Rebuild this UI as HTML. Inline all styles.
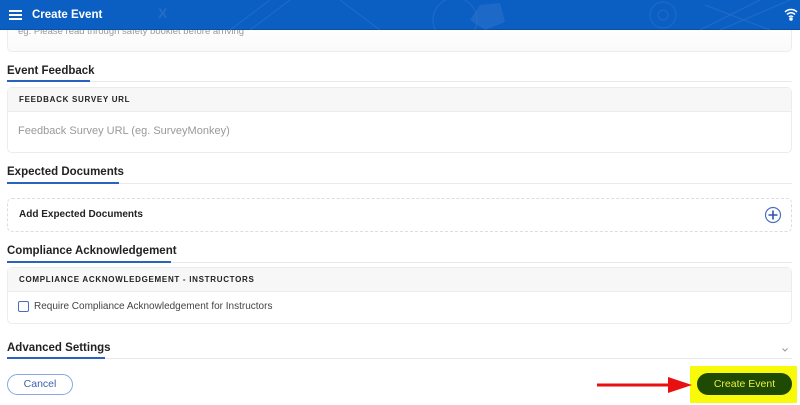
<!DOCTYPE html>
<html><head><style>
*{box-sizing:border-box;margin:0;padding:0}
body{width:800px;height:405px;overflow:hidden;background:#fff;font-family:"Liberation Sans",sans-serif;position:relative;color:#222}
.abs{position:absolute}
.hdr{left:0;top:0;width:800px;height:30px;background:#0b5fc2;border-bottom:1px solid #0a4fa0;z-index:5}
.h2{font-size:11.5px;font-weight:bold;color:#222}
.line{height:1px;background:#eaeaea;left:7px;width:785px}
.ul{height:2px;background:#2b62c0;left:7px}
.card{left:7px;width:785px;border:1px solid #ececec;border-radius:5px;background:#fff}
.ch{background:#f7f7f7;border-bottom:1px solid #ececec;font-size:8px;font-weight:bold;letter-spacing:.7px;padding-left:11px;color:#222}
</style></head><body>
<div class="abs hdr">
<svg class="abs" style="left:0;top:0" width="800" height="30">
<g stroke="#2f74cc" stroke-width="1" fill="none" opacity=".6">
<line x1="230" y1="30" x2="270" y2="0"/><line x1="250" y1="30" x2="290" y2="0"/><line x1="380" y1="30" x2="340" y2="0"/>
<circle cx="455" cy="20" r="22"/><circle cx="663" cy="15" r="13"/><circle cx="663" cy="15" r="5"/>
<line x1="700" y1="30" x2="760" y2="0"/><line x1="720" y1="30" x2="790" y2="0"/><line x1="705" y1="5" x2="770" y2="30"/>
</g>
<polygon points="480,5 500,3 505,22 485,30 470,20" fill="#2f74cc" opacity=".5"/>
<text x="158" y="18" fill="#2f74cc" font-size="14" font-weight="bold" opacity=".7">X</text>
</svg>
<div class="abs" style="left:9px;top:10px;width:13px;height:2px;background:#fff;box-shadow:0 4px 0 #fff,0 8px 0 #fff"></div>
<div class="abs" style="left:32px;top:9px;color:#fff;font-weight:bold;font-size:11.5px">Create Event</div>
<svg class="abs" style="left:784px;top:7px" width="14" height="14" viewBox="0 0 14 14" fill="none" stroke="#fff" stroke-width="1.5"><path d="M1 5a8.5 8.5 0 0 1 12 0M3 7.5a5.5 5.5 0 0 1 8 0M5 10a2.5 2.5 0 0 1 4 0"/><circle cx="7" cy="12" r="1" fill="#fff"/></svg>
</div>
<div class="abs card" style="top:20px;height:32px;border-top:none;background:linear-gradient(#fff,#fafafa)"></div>
<div class="abs" style="left:18px;top:26px;font-size:9.5px;color:#999">eg. Please read through safety booklet before arriving</div>

<div class="abs h2" style="left:7px;top:65px">Event Feedback</div>
<div class="abs line" style="top:81px"></div><div class="abs ul" style="top:80px;width:83px"></div>
<div class="abs card" style="top:87px;height:66px"><div class="ch" style="height:24px;line-height:23px">FEEDBACK SURVEY URL</div>
<div style="padding:13px 0 0 10px;font-size:11px;color:#999">Feedback Survey URL (eg. SurveyMonkey)</div></div>

<div class="abs h2" style="left:7px;top:166px">Expected Documents</div>
<div class="abs line" style="top:183px"></div><div class="abs ul" style="top:182px;width:112px"></div>
<div class="abs card" style="top:198px;height:34px;border:1px dashed #ddd"><div style="padding:10px 0 0 11px;font-size:10px;font-weight:bold">Add Expected Documents</div></div>
<svg class="abs" style="left:764px;top:206px" width="18" height="18" viewBox="0 0 18 18"><circle cx="9" cy="9" r="7.5" fill="none" stroke="#4a72c0" stroke-width="1.2"/><path d="M9 4.5v9M4.5 9h9" stroke="#2e55a8" stroke-width="1.6"/></svg>

<div class="abs h2" style="left:7px;top:245px">Compliance Acknowledgement</div>
<div class="abs line" style="top:262px"></div><div class="abs ul" style="top:261px;width:164px"></div>
<div class="abs card" style="top:267px;height:57px"><div class="ch" style="height:24px;line-height:23px">COMPLIANCE ACKNOWLEDGEMENT - INSTRUCTORS</div>
<div style="position:relative;height:32px"><div class="abs" style="left:10px;top:9px;width:11px;height:11px;border:1.5px solid #4a6fb8;border-radius:2px"></div>
<div class="abs" style="left:26px;top:9px;font-size:10px;color:#444">Require Compliance Acknowledgement for Instructors</div></div></div>

<div class="abs h2" style="left:7px;top:342px">Advanced Settings</div>
<div class="abs line" style="top:358px"></div><div class="abs ul" style="top:357px;width:98px"></div>
<svg class="abs" style="left:780px;top:346px" width="10" height="8"><path d="M2.5 2.5l2.5 2.5 2.5-2.5" stroke="#999" fill="none"/></svg>

<div class="abs" style="left:7px;top:374px;width:66px;height:21px;border:1px solid #8aa8dd;border-radius:11px;color:#3d64b0;font-size:10.5px;text-align:center;line-height:19px">Cancel</div>

<div class="abs" style="left:690px;top:366px;width:107px;height:37px;background:#f9f90a"></div>
<div class="abs" style="left:697px;top:373px;width:95px;height:22px;background:#1f4a04;border-radius:11px;color:#e8f040;font-size:10.5px;text-align:center;line-height:22px">Create Event</div>
<svg class="abs" style="left:594px;top:375px" width="102" height="20"><path d="M3 10H78" stroke="#e81010" stroke-width="3"/><polygon points="74,2 98,10 74,18" fill="#e81010"/></svg>
</body></html>
